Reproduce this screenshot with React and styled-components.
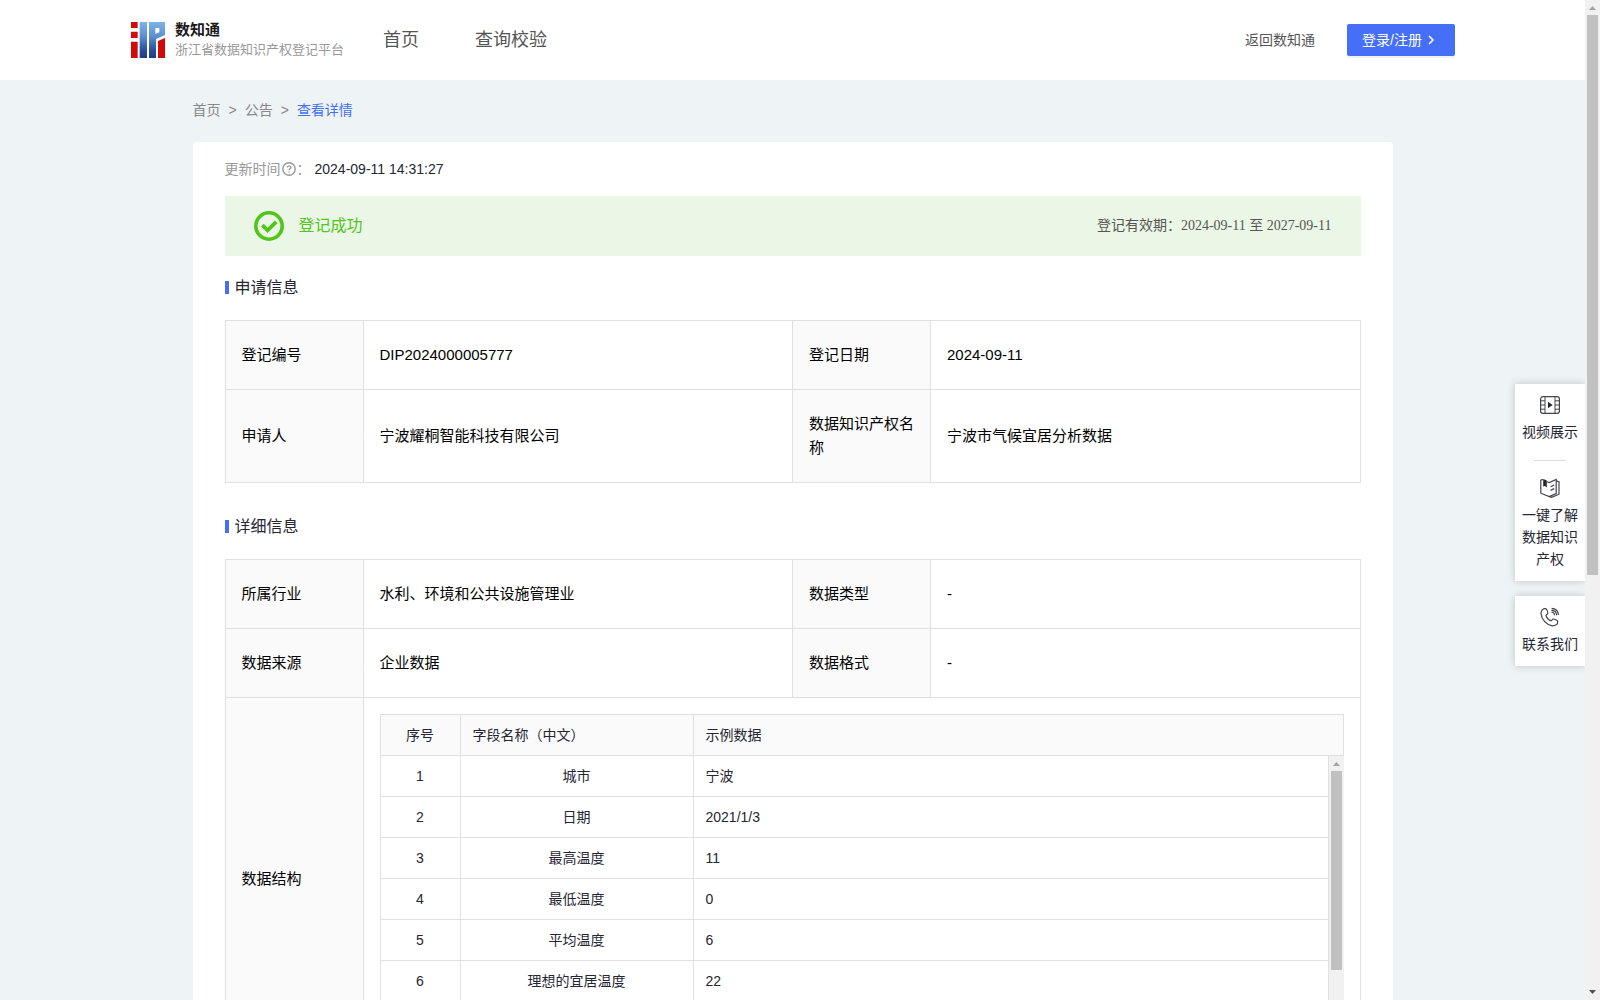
import React from "react";
import styled, { createGlobalStyle } from "styled-components";

const GlobalStyle = createGlobalStyle`
  * {
    box-sizing: border-box;
  }
  body {
    margin: 0;
    font-family: "Liberation Sans", "Noto Sans CJK SC", sans-serif;
    font-size: 14px;
    line-height: 22px;
    color: #262633;
    background-color: #eef3f6;
  }
`;

const Shell = styled.div`
  position: relative;
  display: flex;
  height: 100vh;
`;

const Page = styled.div`
  flex: 1;
  min-width: 0;
  overflow-y: auto;
  scrollbar-width: none;
`;

const Header = styled.header`
  display: flex;
  align-items: center;
  height: 80px;
  padding: 0 130px;
  background-color: #fff;
`;

const Brand = styled.a`
  display: flex;
  align-items: center;
  gap: 9px;
  width: 215px;
  color: #999;
  font-size: 13px;
  line-height: 20px;
  text-decoration: none;
  white-space: nowrap;
`;

const BrandName = styled.strong`
  display: block;
  color: #1a1a1a;
  font-size: 15px;
  font-weight: 700;
`;

const Nav = styled.nav`
  display: flex;
  flex: 1;
  gap: 56px;
  margin-left: 38px;
`;

const NavLink = styled.a`
  color: #555;
  font-size: 18px;
  line-height: 24px;
  text-decoration: none;
`;

const BackLink = styled.a`
  margin-right: 32px;
  color: #555;
  text-decoration: none;
`;

const LoginButton = styled.button`
  display: flex;
  align-items: center;
  gap: 2px;
  width: 108px;
  height: 32px;
  padding: 0 15px;
  border: 0;
  border-radius: 2px;
  background-color: #456ff6;
  box-shadow: 0 2px 0 rgba(0, 0, 0, 0.05);
  color: #fff;
  font: inherit;
  white-space: nowrap;
  cursor: pointer;
`;

const Container = styled.main`
  max-width: 1200px;
  margin: 0 auto;
`;

const Breadcrumb = styled.nav`
  display: flex;
  gap: 8px;
  padding: 19px 0 21px;
  color: #888;
`;

const Crumb = styled.a`
  color: ${(props) => (props.$active ? "#456ff6" : "#888")};
  text-decoration: none;
`;

const Card = styled.section`
  padding: 16px 32px 32px;
  border-radius: 4px;
  background-color: #fff;
`;

const UpdateTime = styled.div`
  display: flex;
  align-items: center;
  gap: 1px;
  color: #999;
`;

const UpdateValue = styled.time`
  margin-left: 3px;
  color: #262633;
`;

const Banner = styled.div`
  display: flex;
  align-items: center;
  gap: 15px;
  height: 60px;
  margin-top: 16px;
  padding: 0 29px;
  background-color: #ebf7e6;
`;

const BannerStatus = styled.span`
  flex: 1;
  color: #52c41a;
  font-size: 16px;
`;

const BannerPeriod = styled.span`
  color: #555;
  font-family: "Liberation Serif", "Noto Sans CJK SC", serif;
`;

const SectionTitle = styled.h2`
  display: flex;
  align-items: center;
  gap: 6px;
  margin: ${(props) => (props.$spaced ? "32px 0 21px" : "20px 0 21px")};
  font-size: 16px;
  font-weight: 400;
  line-height: 23px;
  &::before {
    content: "";
    width: 4px;
    height: 13px;
    background-color: #456ff6;
  }
`;

const InfoTable = styled.table`
  width: 100%;
  border-collapse: collapse;
  table-layout: fixed;
  color: #000;
  font-size: 15px;
  line-height: 24px;
`;

const InfoLabel = styled.th`
  padding: 22px 16px;
  border: 1px solid #e0e0e0;
  background-color: #fafafa;
  font-weight: 400;
  text-align: left;
`;

const InfoValue = styled.td`
  padding: ${(props) => (props.$nested ? "16px" : "22px 16px")};
  border: 1px solid #e0e0e0;
`;

const LabelCol = styled.col`
  width: 138px;
`;

const FieldTable = styled.table`
  width: 100%;
  border-collapse: separate;
  border-spacing: 0;
  table-layout: fixed;
  border-left: 1px solid #e0e0e0;
  color: #262633;
  font-size: 14px;
  line-height: 22px;
`;

const FieldHead = styled.th`
  height: 42px;
  padding: 0 12px;
  border: 1px solid #e0e0e0;
  border-left: 0;
  background-color: #fafafa;
  font-weight: 400;
  text-align: ${(props) => props.$align || "left"};
`;

const FieldCell = styled.td`
  height: 41px;
  padding: 0 12px;
  border-right: 1px solid #e0e0e0;
  border-bottom: 1px solid #e0e0e0;
  text-align: ${(props) => props.$align || "left"};
`;

const IndexCol = styled.col`
  width: 80px;
`;

const NameCol = styled.col`
  width: 233px;
`;

const FieldBody = styled.div`
  display: flex;
  height: 287px;
`;

const FieldRows = styled.div`
  flex: 1;
  min-width: 0;
  overflow-y: auto;
  scrollbar-width: none;
`;

const Track = styled.div`
  display: flex;
  flex: none;
  flex-direction: column;
  width: 15px;
  background-color: #f1f1f1;
`;

const Thumb = styled.div`
  height: ${(props) => props.$size};
  margin: 0 2px;
  background-color: #c1c1c1;
`;

const Rail = styled.div`
  flex: 1;
  min-height: 0;
`;

const Arrow = styled.svg`
  display: block;
  flex: none;
  width: 15px;
  height: 15px;
`;

const SideTools = styled.aside`
  position: absolute;
  top: 384px;
  right: 15px;
  display: flex;
  flex-direction: column;
  gap: 15px;
  width: 70px;
`;

const SideCard = styled.div`
  padding: 11px 7px;
  background-color: #fff;
  box-shadow: 0 0 8px rgba(0, 0, 0, 0.2);
  clip-path: inset(-12px 0 -12px -12px);
`;

const SideLink = styled.a`
  display: flex;
  flex-direction: column;
  align-items: center;
  gap: 6px;
  color: #262633;
  text-align: center;
  text-decoration: none;
`;

const SideDivider = styled.hr`
  width: 32px;
  margin: 17px auto;
  border: 0;
  border-top: 1px solid #ddd;
`;

const fields = [
  ["城市", "宁波"],
  ["日期", "2021/1/3"],
  ["最高温度", "11"],
  ["最低温度", "0"],
  ["平均温度", "6"],
  ["理想的宜居温度", "22"],
];

const Logo = () => (
  <svg width="36" height="36" viewBox="0 0 108 108" aria-hidden="true">
    <defs>
      <linearGradient id="blue" x1="0" y1="0" x2="0" y2="108" gradientUnits="userSpaceOnUse">
        <stop offset="0" stopColor="#7db4e8" />
        <stop offset="0.4" stopColor="#5c8fd0" />
        <stop offset="0.8" stopColor="#284a98" />
        <stop offset="1" stopColor="#223c86" />
      </linearGradient>
    </defs>
    <path fill="#d20a0a" d="M3 0h20v18H3zM3 29h20v19H3zM3 59h20v49H3zM84 57l21-9v60H84z" />
    <path
      fill="url(#blue)"
      fillRule="evenodd"
      d="M29 0h22v108H29zM57 0h48v39l-27 12v57H57zM76 18v17l12-4V18z"
    />
  </svg>
);

const QuestionIcon = () => (
  <svg width="14" height="14" viewBox="0 0 14 14" fill="none" stroke="#999" aria-hidden="true">
    <circle cx="7" cy="7" r="6.2" strokeWidth="1.4" />
    <path d="M5.2 5.6c0-2.3 3.6-2.3 3.6-.1 0 1.2-1.8 1.4-1.8 2.7M7 9.4v1.2" strokeWidth="1.4" />
  </svg>
);

const SuccessIcon = () => (
  <svg width="30" height="30" viewBox="0 0 30 30" fill="none" stroke="#52c41a" aria-hidden="true">
    <circle cx="15" cy="15" r="13.2" strokeWidth="3.6" />
    <path d="M8.4 14.2l5.2 5.2 8.6-8.6" strokeWidth="3.8" />
  </svg>
);

const ChevronIcon = () => (
  <svg width="14" height="14" viewBox="0 0 14 14" fill="none" stroke="#fff" aria-hidden="true">
    <path d="M5 3l4 4-4 4" strokeWidth="1.6" />
  </svg>
);

const VideoIcon = () => (
  <svg width="20" height="20" viewBox="0 0 20 20" fill="none" stroke="#44444f" aria-hidden="true">
    <rect x="0.6" y="1.6" width="18.8" height="16.8" rx="2.4" strokeWidth="1.2" />
    <path d="M5 1.6v16.8M15 1.6v16.8M.6 5.8H5M.6 10H5M.6 14.2H5M15 5.8h4.4M15 10h4.4M15 14.2h4.4" />
    <path d="M8 6.8v6.4l4.6-3.2z" fill="#262633" stroke="none" />
  </svg>
);

const BookIcon = () => (
  <svg width="20" height="20" viewBox="0 0 20 20" fill="none" stroke="#44444f" aria-hidden="true">
    <path
      d="M.8 1.8v13.4l8.4 3.4 7-3V1.4L9.2 4.6 7 3.8M3 1.6L.8 1.8M16.2 2.8l2.8.8v12.6l-7.4 3.2-2.4-.8"
      strokeWidth="1.2"
    />
    <path d="M3.2 1l3.6 1.4v7L5 8 3.2 8.4z" fill="#262633" stroke="none" />
    <path d="M10.6 8.8l3.6-1.8M10.6 12.4l3.6-1.8" strokeWidth="1.2" />
  </svg>
);

const PhoneIcon = () => (
  <svg width="20" height="20" viewBox="0 0 20 20" fill="none" stroke="#44444f" strokeWidth="1.2" aria-hidden="true">
    <path d="M5.6 1.6C3 1.2 1 3.6 1 6.6c.6 6 5.6 11.4 11.2 12.2 3 .2 5.8-1.4 5.6-4.2-.2-1.2-3.4-2.8-4.6-2.6-1 .2-1.2 1.8-2.2 1.8C9 13.2 6.4 10.6 6 8.6c0-1 1.6-1.2 1.8-2.2.2-1.4-1-4.4-2.2-4.8z" />
    <path d="M11.4 5c1.8.2 3 1.4 3.2 3.2M11.6 1.4c4 .2 6.6 2.6 6.8 6.6M11.4 3.2c3 .2 5 2 5.2 5" />
  </svg>
);

const Scrollbar = ({ thumb }) => (
  <Track aria-hidden="true">
    <Arrow viewBox="0 0 15 15">
      <path d="M4 10L7.5 6 11 10z" fill="#a3a3a3" />
    </Arrow>
    <Rail>
      <Thumb $size={thumb} />
    </Rail>
    <Arrow viewBox="0 0 15 15">
      <path d="M4 5L7.5 9 11 5z" fill="#505050" />
    </Arrow>
  </Track>
);

const InfoColumns = () => (
  <colgroup>
    <LabelCol />
    <col />
    <LabelCol />
    <col />
  </colgroup>
);

const InfoRow = ({ items }) => (
  <tr>
    {items.map(([label, value]) => (
      <React.Fragment key={label}>
        <InfoLabel scope="row">{label}</InfoLabel>
        <InfoValue>{value}</InfoValue>
      </React.Fragment>
    ))}
  </tr>
);

const FieldColumns = () => (
  <colgroup>
    <IndexCol />
    <NameCol />
    <col />
  </colgroup>
);

// header stays outside the scrolling rows
const FieldList = () => (
  <>
    <FieldTable>
      <FieldColumns />
      <thead>
        <tr>
          <FieldHead $align="center">序号</FieldHead>
          <FieldHead>字段名称（中文）</FieldHead>
          <FieldHead>示例数据</FieldHead>
        </tr>
      </thead>
    </FieldTable>
    <FieldBody>
      <FieldRows>
        <FieldTable>
          <FieldColumns />
          <tbody>
            {fields.map(([name, sample], index) => (
              <tr key={name}>
                <FieldCell $align="center">{index + 1}</FieldCell>
                <FieldCell $align="center">{name}</FieldCell>
                <FieldCell>{sample}</FieldCell>
              </tr>
            ))}
          </tbody>
        </FieldTable>
      </FieldRows>
      <Scrollbar thumb="199px" />
    </FieldBody>
  </>
);

const App = () => {
  return (
    <Shell>
      <GlobalStyle />
      <Page>
        <Header>
          <Brand href="#">
            <Logo />
            <span>
              <BrandName>数知通</BrandName>
              浙江省数据知识产权登记平台
            </span>
          </Brand>
          <Nav>
            <NavLink href="#">首页</NavLink>
            <NavLink href="#">查询校验</NavLink>
          </Nav>
          <BackLink href="#">返回数知通</BackLink>
          <LoginButton type="button">
            登录/注册
            <ChevronIcon />
          </LoginButton>
        </Header>
        <Container>
          <Breadcrumb>
            <Crumb href="#">首页</Crumb>
            <span>&gt;</span>
            <Crumb href="#">公告</Crumb>
            <span>&gt;</span>
            <Crumb href="#" $active>查看详情</Crumb>
          </Breadcrumb>
          <Card>
            <UpdateTime>
              更新时间
              <QuestionIcon />
              ：
              <UpdateValue>2024-09-11 14:31:27</UpdateValue>
            </UpdateTime>
            <Banner>
              <SuccessIcon />
              <BannerStatus>登记成功</BannerStatus>
              <BannerPeriod>登记有效期：2024-09-11 至 2027-09-11</BannerPeriod>
            </Banner>
            <SectionTitle>申请信息</SectionTitle>
            <InfoTable>
              <InfoColumns />
              <tbody>
                <InfoRow items={[["登记编号", "DIP2024000005777"], ["登记日期", "2024-09-11"]]} />
                <InfoRow
                  items={[
                    ["申请人", "宁波耀桐智能科技有限公司"],
                    ["数据知识产权名称", "宁波市气候宜居分析数据"],
                  ]}
                />
              </tbody>
            </InfoTable>
            <SectionTitle $spaced>详细信息</SectionTitle>
            <InfoTable>
              <InfoColumns />
              <tbody>
                <InfoRow items={[["所属行业", "水利、环境和公共设施管理业"], ["数据类型", "-"]]} />
                <InfoRow items={[["数据来源", "企业数据"], ["数据格式", "-"]]} />
                <tr>
                  <InfoLabel scope="row">数据结构</InfoLabel>
                  <InfoValue $nested colSpan={3}>
                    <FieldList />
                  </InfoValue>
                </tr>
              </tbody>
            </InfoTable>
          </Card>
        </Container>
      </Page>
      <Scrollbar thumb="560px" />
      <SideTools>
        <SideCard>
          <SideLink href="#">
            <VideoIcon />
            视频展示
          </SideLink>
          <SideDivider />
          <SideLink href="#">
            <BookIcon />
            一键了解数据知识产权
          </SideLink>
        </SideCard>
        <SideCard>
          <SideLink href="#">
            <PhoneIcon />
            联系我们
          </SideLink>
        </SideCard>
      </SideTools>
    </Shell>
  );
};

export default App;
